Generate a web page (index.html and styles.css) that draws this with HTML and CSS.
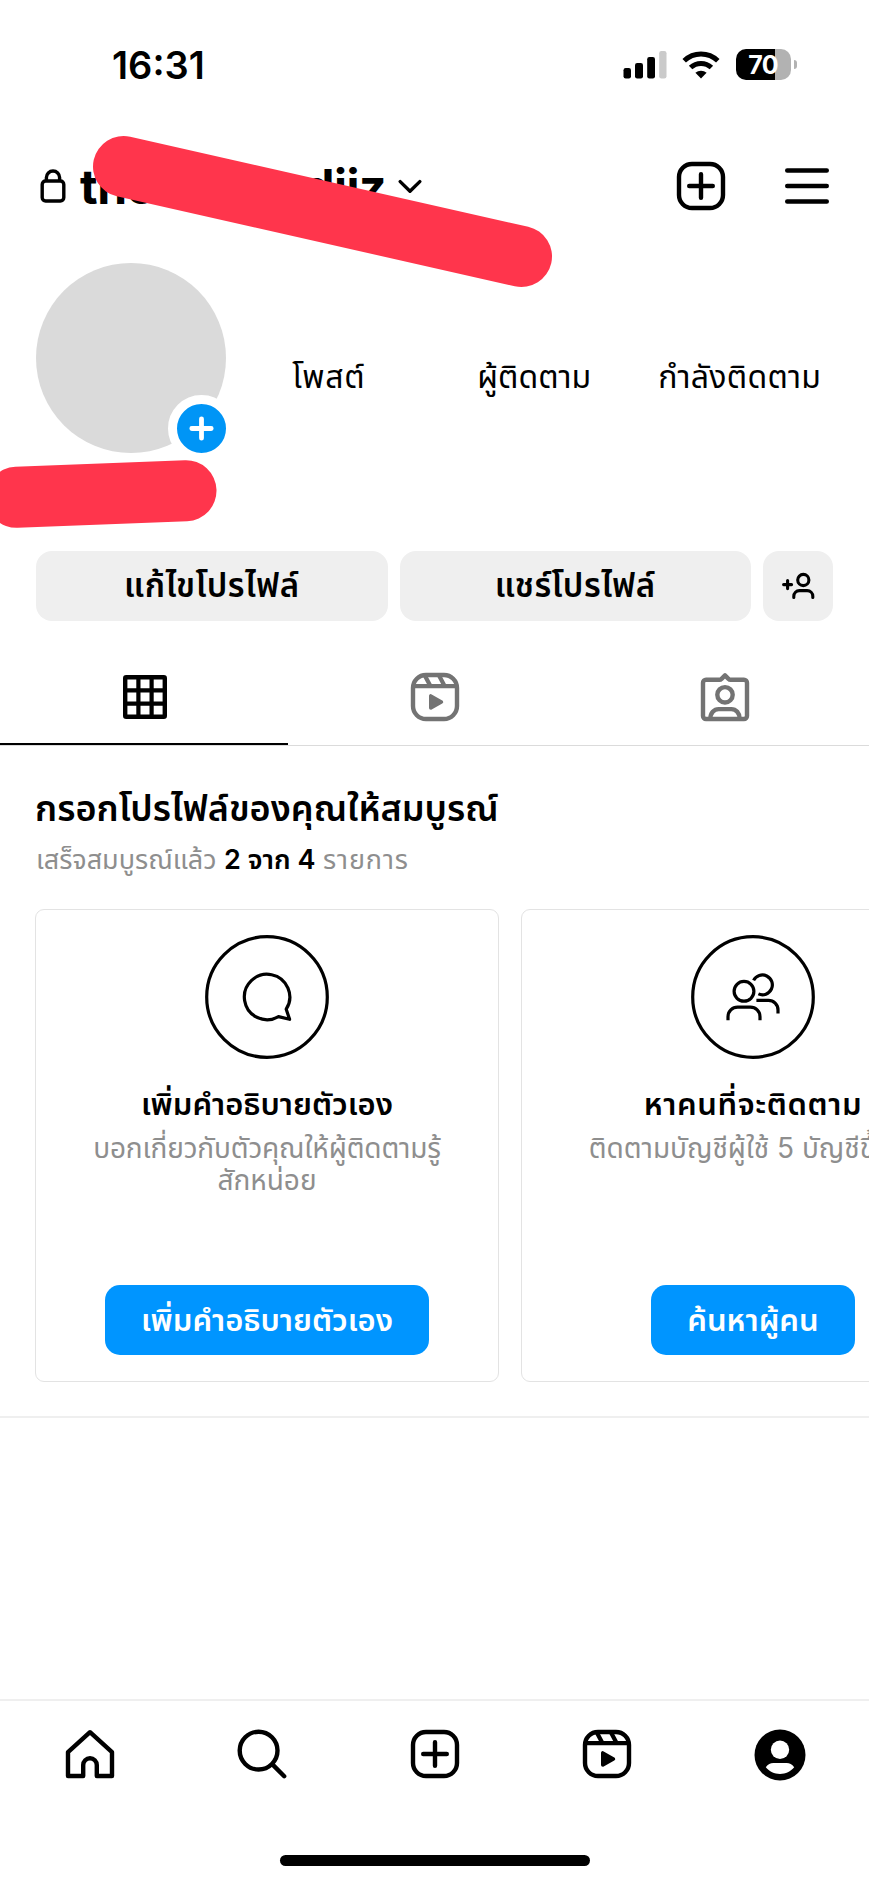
FILE: index.html
```html
<!DOCTYPE html>
<html lang="th">
<head>
<meta charset="utf-8">
<title>โปรไฟล์</title>
<link rel="stylesheet" href="styles.css">
</head>
<body>
<svg class="defs" width="0" height="0">
  <symbol id="i-create" viewBox="0 0 50 50">
    <rect x="3" y="3" width="44" height="44" rx="13" fill="none" stroke="currentColor" stroke-width="4.4"/>
    <path d="M25 13.2v23.6M13.2 25h23.6" fill="none" stroke="currentColor" stroke-width="4.4" stroke-linecap="round"/>
  </symbol>
  <symbol id="i-reels" viewBox="0 0 50 50">
    <rect x="3" y="3" width="44" height="44" rx="13" fill="none" stroke="currentColor" stroke-width="4.4"/>
    <path d="M3 14.2h44M14.8 3.5l5.6 10.5M29 3.5l5.6 10.5" fill="none" stroke="currentColor" stroke-width="4.2"/>
    <path d="M20.8 24v12l10.6-6z" fill="currentColor" stroke="currentColor" stroke-width="3.6" stroke-linejoin="round"/>
  </symbol>
</svg>
<div class="screen">
  <header class="status">
    <span class="clock">16:31</span>
    <div class="signals">
      <svg width="44" height="30" viewBox="0 0 44 30">
        <rect x="0.5" y="18" width="7.5" height="10.5" rx="2.2"/>
        <rect x="12" y="13" width="8" height="15.5" rx="2.2"/>
        <rect x="24.2" y="7" width="7.8" height="21.5" rx="2.2"/>
        <rect x="36.2" y="1" width="7.3" height="27.5" rx="2.2" fill="#cacaca"/>
      </svg>
      <svg class="wifi" width="38" height="30" viewBox="0 0 38 30">
        <path d="M2.2 10.8a24.3 24.3 0 0 1 33.6 0M8.6 17.5a15.2 15.2 0 0 1 20.8 0" fill="none" stroke="#000" stroke-width="5"/>
        <path d="M19 28.6l-5.6-5.8a8.4 8.4 0 0 1 11.2 0z"/>
      </svg>
      <div class="battery"><div class="cell">70</div><i class="nub"></i></div>
    </div>
  </header>

  <div class="topbar">
    <svg class="lock" width="26" height="34" viewBox="0 0 26 34" fill="none" stroke="#000" stroke-width="3.4">
      <rect x="2.2" y="12" width="21.6" height="20" rx="3.4"/>
      <path d="M6.4 12V8.6a6.6 6.6 0 0 1 13.2 0V12"/>
    </svg>
    <div class="username"><span>the</span><span>diiz</span></div>
    <svg class="chevron" width="24" height="16" viewBox="0 0 24 16"><path d="M2.2 2.6L12 12.2l9.8-9.6" fill="none" stroke="#000" stroke-width="3.4" stroke-linecap="round" stroke-linejoin="round"/></svg>
    <svg class="create" width="50" height="50"><use href="#i-create"/></svg>
    <svg class="menu" width="46" height="38" viewBox="0 0 46 38"><path d="M3.2 3.5h39.6M3.2 19h39.6M3.2 34.5h39.6" stroke="#000" stroke-width="4.4" stroke-linecap="round"/></svg>
  </div>

  <section class="profile">
    <div class="avatar">
      <div class="badge"><svg width="49" height="49" viewBox="0 0 49 49"><path d="M24.5 14.8v19.4M14.8 24.5h19.4" stroke="#fff" stroke-width="4.8" stroke-linecap="round"/></svg></div>
    </div>
    <div class="stats">
      <span class="t-posts">โพสต์</span><span class="t-followers">ผู้ติดตาม</span><span class="t-following">กำลังติดตาม</span>
    </div>
  </section>

  <div class="actions">
    <button class="btn"><span class="t-edit">แก้ไขโปรไฟล์</span></button>
    <button class="btn"><span class="t-share">แชร์โปรไฟล์</span></button>
    <button class="btn discover">
      <svg width="34" height="28" viewBox="0 0 34 28" fill="none" stroke="#000" stroke-width="3.1" stroke-linecap="round">
        <path d="M2.6 12.6h8M6.6 8.6v8"/><circle cx="22.3" cy="8" r="5.6"/>
        <path d="M12.8 25.4v-1.2a5.600 5.600 0 0 1 5.600-5.600h7.800a5.600 5.600 0 0 1 5.600 5.600v1.2"/>
      </svg>
    </button>
  </div>

  <nav class="tabs">
    <div class="tab active">
      <svg width="44" height="44" viewBox="0 0 44 44"><rect x="2.2" y="2.2" width="39.600" height="39.600" rx="1" fill="none" stroke="#000" stroke-width="4.400"/><path d="M15.400 2v40M28.600 2v40M2 15.400h40M2 28.600h40" stroke="#000" stroke-width="4.200"/></svg>
    </div>
    <div class="tab"><svg width="50" height="50"><use href="#i-reels"/></svg></div>
    <div class="tab">
      <svg width="50" height="50" viewBox="0 0 50 50" fill="none" stroke="#737373" stroke-width="4.400" stroke-linejoin="round">
        <path d="M6 7.800h13.400c1 0 1.700-.5 2.400-1.200L25 3.400l3.200 3.200c.7.7 1.400 1.200 2.400 1.200H44a3 3 0 0 1 3 3V44a3 3 0 0 1-3 3H6a3 3 0 0 1-3-3V10.800a3 3 0 0 1 3-3z"/>
        <circle cx="25" cy="22.800" r="7.700"/>
        <path d="M10.400 46.500c0-5.500 3.500-9.400 8.300-9.400h12.600c4.800 0 8.300 3.900 8.300 9.400"/>
      </svg>
    </div>
  </nav>

  <section class="complete">
    <h2><span class="t-head">กรอกโปรไฟล์ของคุณให้สมบูรณ์</span></h2>
    <p class="progress"><span class="t-done">เสร็จสมบูรณ์แล้ว</span> <b class="t-count">2 จาก 4</b> <span class="t-items">รายการ</span></p>
    <div class="cards">
      <article class="card">
        <svg width="124" height="124" viewBox="0 0 124 124" fill="none" stroke="#000" stroke-width="3.200" stroke-linejoin="round">
          <circle cx="62" cy="62" r="60.300"/>
          <path d="M81.200 74.200A22.700 22.700 0 1 0 73.500 81.600L84.600 84.300z"/>
        </svg>
        <h3><span class="t-bio">เพิ่มคำอธิบายตัวเอง</span></h3>
        <p><span class="t-desc">บอกเกี่ยวกับตัวคุณให้ผู้ติดตามรู้</span><br><span class="t-desc2">สักหน่อย</span></p>
        <button class="cta"><span class="t-bio">เพิ่มคำอธิบายตัวเอง</span></button>
      </article>
      <article class="card">
        <svg width="124" height="124" viewBox="0 0 124 124" fill="none" stroke="#000" stroke-width="3.200">
          <circle cx="62" cy="62" r="60.300"/>
          <circle cx="53" cy="56.300" r="9.900"/>
          <path d="M37 85.300v-3.600a9.600 9.600 0 0 1 9.600-9.600h12.800a9.600 9.600 0 0 1 9.600 9.600v3.600M62.600 45.400A9.900 9.900 0 1 1 67.400 58.900M65.400 65.300h12a9.600 9.600 0 0 1 9.600 9.600v3.600"/>
        </svg>
        <h3><span class="t-find">หาคนที่จะติดตาม</span></h3>
        <p><span class="t-desc3">ติดตามบัญชีผู้ใช้ 5 บัญชีขึ้นไป</span></p>
        <button class="cta"><span class="t-people">ค้นหาผู้คน</span></button>
      </article>
    </div>
  </section>

  <footer class="bottom">
    <nav class="nav">
      <svg width="50" height="50" viewBox="0 0 50 50" fill="none" stroke="#000" stroke-width="4.400" stroke-linejoin="round"><path d="M3 47V23.200L25 3.200l22 20V47H31.800V36a6.800 6.800 0 0 0-13.600 0v11z"/></svg>
      <svg width="50" height="50" viewBox="0 0 50 50" fill="none" stroke="#000" stroke-width="4.400" stroke-linecap="round"><circle cx="21.600" cy="21.600" r="18.900"/><path d="M35.400 35.400L47.200 47.200"/></svg>
      <svg width="50" height="50"><use href="#i-create"/></svg>
      <svg width="50" height="50"><use href="#i-reels"/></svg>
      <svg width="52" height="52" viewBox="0 0 52 52"><circle cx="26" cy="26" r="25.500"/><circle cx="26" cy="20.800" r="9.200" fill="#fff"/><path d="M11.800 38.300c2.200-3 4.500-4.300 7.600-4.300h13.200c3.100 0 5.400 1.300 7.600 4.300-3.500 4.300-8.600 6.600-14.200 6.600s-10.700-2.300-14.200-6.600z" fill="#fff"/></svg>
    </nav>
    <div class="home-bar"></div>
  </footer>

  <svg class="scribbles" width="869" height="560" viewBox="0 0 869 560" fill="none" stroke="#ff354c" stroke-width="61" stroke-linecap="round">
    <path d="M123.500 166.500L521.500 256.500M16.500 497.300L186 490.700"/>
  </svg>
</div>
</body>
</html>
```
FILE: styles.css
```css
* { box-sizing: border-box; }
body { margin: 0; background: #fff; color: #000; font-family: Inter, "Noto Sans Thai", "Noto Sans Thai Looped", "Loma", sans-serif; }
button { border: 0; padding: 0; font-family: inherit; color: inherit; }
h2, h3, p { margin: 0; font-weight: 400; }
svg { display: block; flex: none; }
span { white-space: nowrap; }
.defs { position: absolute; }
.screen { position: relative; width: 869px; height: 1884px; overflow: hidden; display: flex; flex-direction: column; }

.status { height: 130px; padding: 50px 72px 0 112px; display: flex; justify-content: space-between; align-items: flex-start; }
.clock { font-size: 38px; font-weight: 600; line-height: 30px; }
.signals { display: flex; align-items: flex-start; }
.wifi { margin-left: 15px; }
.battery { display: flex; align-items: center; margin: -1px 0 0 16px; }
.cell { width: 55px; height: 31px; border-radius: 10px; background: linear-gradient(90deg, #000 39px, #b2b2b2 39px); color: #fff; font-size: 25px; font-weight: 700; line-height: 32px; text-align: center; letter-spacing: -0.8px; padding-right: 1px; }
.nub { width: 3px; height: 9px; margin-left: 3px; background: #b2b2b2; border-radius: 0 4px 4px 0; }

.topbar { height: 133px; padding: 30px 39px 0 40px; display: flex; align-items: flex-start; }
.lock { margin-top: 9px; }
.username { width: 306px; margin-left: 14px; display: flex; justify-content: space-between; margin-top: 0; font-size: 48px; font-weight: 700; line-height: 54px; letter-spacing: -0.5px; }
.chevron { margin: 19px 0 0 12px; }
.create { margin: 1px 0 0 254px; }
.menu { margin: 7px 0 0 auto; }

.profile { height: 288px; padding-left: 36px; display: flex; }
.avatar { position: relative; width: 190px; height: 190px; border-radius: 50%; background: #dadada; }
.badge { position: absolute; right: -9px; bottom: -9px; width: 67px; height: 67px; border: 9px solid #fff; border-radius: 50%; background: #0095f6; }
.stats { display: grid; grid-template-columns: 205.500px 205.500px 205.500px; height: 50px; margin-top: 89px; font-size: 32px; line-height: 50px; text-align: center; }
.t-posts { letter-spacing: 0.7px; }
.t-following { letter-spacing: 0.3px; }

.actions { display: grid; grid-template-columns: 1fr 1fr 70px; gap: 12px; padding: 0 36px; height: 70px; }
.btn { background: #efefef; border-radius: 16px; font-size: 33px; font-weight: 600; display: flex; align-items: center; justify-content: center; }
.t-edit, .t-share { letter-spacing: 0.5px; padding-top: 2px; }

.tabs { height: 125px; border-bottom: 1px solid #dbdbdb; display: grid; grid-template-columns: 288px 1fr 288px; color: #737373; }
.tab { padding-top: 51px; display: flex; justify-content: center; align-items: flex-start; }
.tab.active { padding: 54px 0 0 2px; border-bottom: 2px solid #000; }

.complete { height: 672px; border-bottom: 2px solid #efefef; padding: 32px 0 0 35px; }
.complete h2 { font-size: 36px; font-weight: 600; line-height: 60px; height: 60px; }
.progress { font-size: 27px; line-height: 44px; height: 42px; color: #8e8e8e; white-space: nowrap; }
.progress b { color: #000; font-weight: 600; }
.t-done { margin-left: 1px; }
.t-items { letter-spacing: 0.9px; }
.cards { margin-top: 29px; display: flex; gap: 22px; }
.card { flex: none; width: 464px; height: 473px; border: 1px solid #e3e3e3; border-radius: 9px; padding-top: 25px; display: flex; flex-direction: column; align-items: center; }
.card h3 { margin-top: 23px; height: 47px; line-height: 44px; font-size: 31px; font-weight: 600; }
.card p { height: 64px; margin-top: 3px; line-height: 32px; font-size: 28px; color: #8e8e8e; text-align: center; }
.t-desc { letter-spacing: -0.15px; }
.t-find { letter-spacing: 0.6px; }
.cta { margin-top: 89px; height: 70px; padding: 2px 36px 0; border-radius: 15px; background: #0095ff; color: #fff; font-size: 31px; font-weight: 600; }
.t-people { letter-spacing: 0; }

.bottom { margin-top: 281px; border-top: 2px solid #efefef; height: 185px; }
.nav { height: 154px; padding: 28px 63px 0 65px; display: flex; justify-content: space-between; align-items: flex-start; }
.home-bar { width: 310px; height: 11px; margin: 0 auto; border-radius: 6px; background: #000; }

.scribbles { position: absolute; left: 0; top: 0; }
```
